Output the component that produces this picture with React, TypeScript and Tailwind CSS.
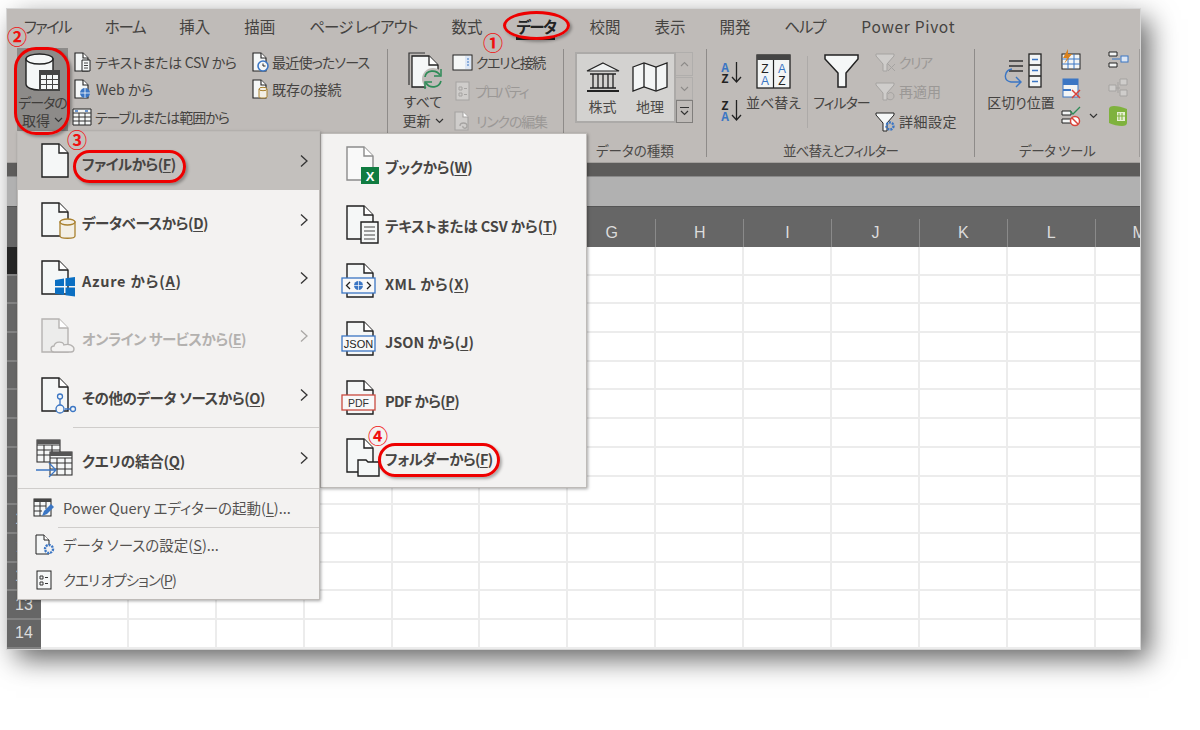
import React from "react";

const Ic = ({ children, w = 44, h = 40 }: { children?: React.ReactNode; w?: number; h?: number }) => (
  <svg width={w} height={h} viewBox={`0 0 ${w} ${h}`} className="shrink-0 overflow-visible">{children}</svg>
);
const Page = ({ c = "#1f1f1f", f = "#f5f7f7" }: { c?: string; f?: string }) => (
  <g fill={f} stroke={c} strokeWidth="1.4">
    <path d="M6 3H23L32 12V36H6Z" />
    <path d="M23 3V12H32" fill="#fff" />
  </g>
);
const B = "#3b76c4";
const Sm = ({ children, w = 20, h = 20 }: { children?: React.ReactNode; w?: number; h?: number }) => (
  <svg width={w} height={h} viewBox={`0 0 ${w} ${h}`} className="shrink-0 overflow-visible">{children}</svg>
);
const SmPage = ({ c = "#222", f = "#f5f7f7" }: { c?: string; f?: string }) => (
  <g fill={f} stroke={c} strokeWidth="1.1">
    <path d="M3 1H11L16 6V19H3Z" />
    <path d="M11 1V6H16" fill="#fff" />
  </g>
);

const Chevron = ({ dim }: { dim?: boolean }) => (
  <svg width="10" height="14" viewBox="0 0 10 14" className="absolute right-[10px] top-1/2 -mt-[7px]">
    <path d="M2 1.5L8 7L2 12.5" fill="none" stroke={dim ? "#a9a7a5" : "#333"} strokeWidth="1.3" />
  </svg>
);
const Down = () => (
  <svg width="9" height="6" viewBox="0 0 9 6" className="inline-block">
    <path d="M1 1L4.5 4.5L8 1" fill="none" stroke="#333" strokeWidth="1.2" />
  </svg>
);

const Sep = ({ className = "" }: { className?: string }) => <div className={`w-px shrink-0 bg-[#8e8b89] ${className}`} />;

const Row = ({ icon, text, dim, h = "h-[27.5px]", gap = "gap-[3px]", tk = "" }: { icon: React.ReactNode; text: string; dim?: boolean; h?: string; gap?: string; tk?: string }) => (
  <div className={`flex items-center whitespace-nowrap ${h} ${gap} ${dim ? "text-[#9b9896]" : "text-[#454341]"}`}>
    {icon}
    <span className={tk}>{text}</span>
  </div>
);

const GroupLabel = ({ children, className = "" }: { children: React.ReactNode; className?: string }) => (
  <div className={`absolute bottom-[2px] text-[13.5px] leading-[20px] text-[#4b4947] whitespace-nowrap ${className}`}>{children}</div>
);

const tabs = [
  { t: "ファイル", c: "tracking-[-1.7px]" },
  { t: "ホーム", c: "tracking-[-1.3px]" },
  { t: "挿入", c: "" },
  { t: "描画", c: "" },
  { t: "ページ レイアウト", c: "tracking-[-1px]" },
  { t: "数式", c: "" },
  { t: "データ", c: "tracking-[-1.6px] font-bold text-[#222] relative" },
  { t: "校閲", c: "" },
  { t: "表示", c: "" },
  { t: "開発", c: "" },
  { t: "ヘルプ", c: "tracking-[-1.2px]" },
  { t: "Power Pivot", c: "ml-[2px] tracking-[0.7px]" },
];

const KeyLabel = ({ t, k, tail = ")", bold = true }: { t: string; k: string; tail?: string; bold?: boolean }) => (
  <span className={`whitespace-nowrap ${bold ? "font-bold" : ""}`}>
    {t}(<span className="underline underline-offset-2">{k}</span>{tail}
  </span>
);

const M1 = ({ icon, t, k, active, dim, h = "h-[58.4px]", tk = "" }: { icon: React.ReactNode; t: string; k: string; active?: boolean; dim?: boolean; h?: string; tk?: string }) => (
  <div className={`relative flex items-center pl-[18px] gap-[2px] ${h} ${active ? "bg-[#c3c0bd]" : ""} ${dim ? "text-[#b3b1af]" : "text-[#474543]"}`}>
    {icon}
    <span className={`mt-[6px] text-[14.5px] ${tk}`}><KeyLabel t={t} k={k} /></span>
    <Chevron dim={dim} />
  </div>
);
const M2 = ({ icon, t, k, tk = "" }: { icon: React.ReactNode; t: string; k: string; tk?: string }) => (
  <div className="flex items-center pl-[20px] h-[58.4px] text-[#474543]">
    {icon}
    <span className={`mt-[6px] text-[14.5px] ${tk}`}><KeyLabel t={t} k={k} /></span>
  </div>
);
const M3 = ({ icon, t, k, tail, h, tk = "" }: { icon: React.ReactNode; t: string; k: string; tail: string; h: string; tk?: string }) => (
  <div className={`flex items-center pl-[14px] gap-[7px] text-[14.5px] text-[#555351] ${h} ${tk}`}>
    {icon}
    <KeyLabel t={t} k={k} tail={tail} bold={false} />
  </div>
);

const Num = ({ children, className }: { children: React.ReactNode; className: string }) => (
  <div className={`absolute text-[20px] font-bold leading-none text-[#f01010] ${className}`}>{children}</div>
);

const cols = ["A", "B", "C", "D", "E", "F", "G", "H", "I", "J", "K", "L", "M"];
const rows = [1, 2, 3, 4, 5, 6, 7, 8, 9, 10, 11, 12, 13, 14];

export default function App() {
  return (
    <div
      className="relative w-[1200px] h-[730px] overflow-hidden bg-white pt-[9px] pl-[7px] text-[14px] [font-feature-settings:'palt'] leading-[20px]"
      style={{ fontFamily: '"Noto Sans CJK JP", "Noto Sans", sans-serif' }}
    >
      {/* Window */}
      <div className="flex flex-col w-[1133px] h-[640px] overflow-hidden shadow-[9px_10px_26px_rgba(0,0,0,0.62)] bg-white outline outline-1 outline-[#d5d5d5]">
        {/* Tabs */}
        <div className="flex items-center h-[37px] shrink-0 bg-[#bfbbb8] pl-[17px] pb-[3px] gap-[34px] text-[15.5px] text-[#454341] whitespace-nowrap">
          {tabs.map(({ t, c }) => (
            <div key={t} className={c}>
              {t}
              {t === "データ" && <div className="absolute left-0 right-0 -bottom-[4px] h-[3px] bg-[#222]" />}
            </div>
          ))}
        </div>

        {/* Ribbon */}
        <div className="relative flex h-[117px] shrink-0 bg-[#bfbbb8] border-b border-[#a4a19e]">
          {/* Group 1 */}
          <div className="flex w-[380px] shrink-0 pl-[10px] pt-[2px]">
            <div className="flex flex-col items-center w-[51px] h-[83px] bg-[#8d8b89] text-[#3f3d3b] text-center leading-[18px] whitespace-nowrap">
              <svg width="40" height="40" viewBox="0 0 40 40" className="mt-[4px] shrink-0 overflow-visible">
                <path d="M3 7V32C3 36 10 38 16 38C23 38 30 36 30 32V7Z" fill="#f5f7f7" stroke="#222" strokeWidth="1.4" />
                <ellipse cx="16.5" cy="7" rx="13.5" ry="5" fill="#f5f7f7" stroke="#222" strokeWidth="1.4" />
                <rect x="16" y="18" width="21" height="21" fill="#444" />
                <g fill="#f5f7f7">
                  <rect x="18" y="23" width="5" height="4" /><rect x="24" y="23" width="5" height="4" /><rect x="30" y="23" width="5" height="4" />
                  <rect x="18" y="28" width="5" height="4" /><rect x="24" y="28" width="5" height="4" /><rect x="30" y="28" width="5" height="4" />
                  <rect x="18" y="33" width="5" height="4" /><rect x="24" y="33" width="5" height="4" /><rect x="30" y="33" width="5" height="4" />
                </g>
              </svg>
              <div className="mt-[1px] tracking-[-1px]">データの</div>
              <div className="flex items-center gap-[4px]">取得 <Down /></div>
            </div>
            <div className="ml-[4px] w-[178px] shrink-0">
              <Row tk="tracking-[-0.3px]" text="テキストまたは CSV から" icon={<Sm><SmPage /><path d="M10 8H18V19H10Z" fill="#f5f7f7" stroke="#222" /><path d="M12 11H16M12 13.5H16M12 16H16" stroke="#444" /></Sm>} />
              <Row text="Web から" gap="gap-[4px]" icon={<Sm><SmPage /><circle cx="13" cy="14" r="5" fill={B} /><path d="M8 14H18M13 9V19" stroke="#fff" strokeWidth=".8" /></Sm>} />
              <Row tk="tracking-[-1px]" text="テーブルまたは範囲から" icon={<Sm><path d="M1 2H19V18H1Z" fill="#f5f7f7" stroke="#222" /><path d="M1 6H19M1 10H19M1 14H19M7 6V18M13 6V18" stroke="#333" /><path d="M3 4H6M13 4H16" stroke={B} strokeWidth="1.4" /></Sm>} />
            </div>
            <div className="shrink-0">
              <Row tk="tracking-[-0.8px]" gap="gap-[2px]" text="最近使ったソース" icon={<Sm><SmPage /><circle cx="13" cy="14" r="5" fill="#f5f7f7" stroke={B} strokeWidth="1.6" /><path d="M13 11.5V14H15.5" stroke="#222" fill="none" /></Sm>} />
              <Row gap="gap-[2px]" text="既存の接続" icon={<Sm><SmPage /><path d="M9 10V18C9 19.4 17 19.4 17 18V10Z" fill="#f3efe5" stroke="#a9812f" /><ellipse cx="13" cy="10" rx="4" ry="1.7" fill="#f3efe5" stroke="#a9812f" /></Sm>} />
            </div>
          </div>
          <Sep className="mt-[3px] mb-[5px]" />

          {/* Group 2 */}
          <div className="flex w-[175px] shrink-0 pl-[12px] pt-[1px]">
            <div className="flex flex-col items-center w-[46px] text-[#454341] text-center leading-[19px]">
              <svg width="40" height="40" viewBox="0 0 40 40" className="mt-[4px] ml-[4px] shrink-0 overflow-visible">
                <path d="M4 34V2H20" fill="none" stroke="#333" strokeWidth="1.2" />
                <path d="M7 36V5H24L33 14V36Z" fill="#f5f7f7" stroke="#222" strokeWidth="1.3" />
                <path d="M24 5V14H33" fill="#fff" stroke="#222" strokeWidth="1.3" />
                <circle cx="28" cy="28" r="11" fill="#bfbbb8" />
                <path d="M20 26C21 19 31 18 35 24M36 30C34 37 25 38 21 32" fill="none" stroke="#2e8b57" strokeWidth="1.7" />
                <path d="M36 18V25H29M20 38V31H27" fill="none" stroke="#2e8b57" strokeWidth="1.5" />
              </svg>
              <div className="mt-[1px]">すべて</div>
              <div className="flex items-center gap-[4px]">更新 <Down /></div>
            </div>
            <div className="ml-[6px] shrink-0">
              <Row tk="tracking-[-1.5px]" h="h-[29.5px]" text="クエリと接続" gap="gap-[4px]" icon={<Sm><rect x="1" y="3" width="19" height="15" fill="#f5f7f7" stroke="#222" /><rect x="13" y="4" width="6" height="13" fill="#dce6f4" /><path d="M15 7H17M15 10H17M15 13H17" stroke={B} strokeWidth="1.2" /></Sm>} />
              <Row tk="tracking-[-2px]" dim h="h-[29.5px]" text="プロパティ" gap="gap-[3px]" icon={<Sm><rect x="4" y="1" width="13" height="18" fill="#cfcdcb" stroke="#a5a3a1" /><path d="M7 6H10V9H7ZM7 12H10V15H7ZM12 7.500H15M12 13.500H15" fill="none" stroke="#a5a3a1" /></Sm>} />
              <Row tk="tracking-[-1.2px]" dim h="h-[29.5px]" text="リンクの編集" gap="gap-[4px]" icon={<Sm><SmPage c="#a5a3a1" f="#cfcdcb" /><path d="M8 15C8 11 15 11 15 15C15 18 10 18 11 15" fill="none" stroke="#a5a3a1" strokeWidth="1.3" /></Sm>} />
            </div>
          </div>
          <Sep className="mt-[3px] mb-[5px]" />

          {/* Group 3 */}
          <div className="relative w-[142px] shrink-0 pl-[11px] pt-[6px]">
            <div className="flex">
              <div className="flex w-[101px] h-[71px] bg-[#d3d2d0] border-2 border-[#acaaa8] text-[#4b4947]">
                <div className="flex flex-col items-center w-[51px] pt-[8px]">
                  <svg width="34" height="30" viewBox="0 0 34 30" className="shrink-0">
                    <path d="M17 1L33 9H1Z" fill="#eef0f0" stroke="#222" strokeWidth="1.2" />
                    <path d="M4 12H30M4 26H30" stroke="#222" strokeWidth="1.4" />
                    <path d="M7 12V26M12 12V26M17 12V26M22 12V26M27 12V26" stroke="#222" strokeWidth="1.3" />
                    <path d="M1 29H33" stroke="#222" strokeWidth="2" />
                  </svg>
                  <div className="mt-[4px]">株式</div>
                </div>
                <div className="flex flex-col items-center w-[44px] pt-[8px]">
                  <svg width="36" height="30" viewBox="0 0 36 30" className="shrink-0">
                    <path d="M1 5L12 1L24 5L35 1V25L24 29L12 25L1 29Z" fill="#f3f5f5" stroke="#222" strokeWidth="1.3" />
                    <path d="M12 1V25M24 5V29" stroke="#222" strokeWidth="1.3" />
                  </svg>
                  <div className="mt-[4px]">地理</div>
                </div>
              </div>
              <div className="flex flex-col w-[17px] h-[71px]">
                <div className="flex h-[24px] items-center justify-center border border-[#b0aeac] border-l-0">
                  <svg width="9" height="6" viewBox="0 0 9 6"><path d="M1 5L4.5 1.500L8 5" fill="none" stroke="#8d8b89" strokeWidth="1.1" /></svg>
                </div>
                <div className="flex h-[23px] mt-[1px] items-center justify-center border border-[#b0aeac] border-l-0">
                  <svg width="9" height="6" viewBox="0 0 9 6"><path d="M1 1L4.5 4.500L8 1" fill="none" stroke="#8d8b89" strokeWidth="1.1" /></svg>
                </div>
                <div className="flex flex-col h-[23px] items-center justify-center border border-[#807e7c]">
                  <div className="w-[9px] h-px bg-[#333]" />
                  <svg width="9" height="6" viewBox="0 0 9 6" className="mt-[2px]"><path d="M1 1L4.5 4.500L8 1" fill="none" stroke="#333" strokeWidth="1.2" /></svg>
                </div>
              </div>
            </div>
            <GroupLabel className="left-[32px]">データの種類</GroupLabel>
          </div>
          <Sep className="mt-[3px] mb-[5px]" />

          {/* Group 4 */}
          <div className="relative flex w-[267px] shrink-0 pl-[12px]">
            <div className="flex flex-col w-[27px] pt-[14px] gap-[15px] text-[12px] font-bold leading-[11px]">
              <div className="flex items-center h-[23px]">
                <div className="text-center w-[12px]"><div className="text-[#3b76c4]">A</div><div className="text-[#222]">Z</div></div>
                <svg width="11" height="22" viewBox="0 0 11 22"><path d="M5.5 1V21M1 16L5.500 21L10 16" fill="none" stroke="#222" strokeWidth="1.3" /></svg>
              </div>
              <div className="flex items-center h-[23px]">
                <div className="text-center w-[12px]"><div className="text-[#222]">Z</div><div className="text-[#3b76c4]">A</div></div>
                <svg width="11" height="22" viewBox="0 0 11 22"><path d="M5.5 1V21M1 16L5.500 21L10 16" fill="none" stroke="#222" strokeWidth="1.3" /></svg>
              </div>
            </div>
            <div className="flex flex-col items-center w-[55px] pt-[8px] text-[#454341] whitespace-nowrap">
              <svg width="35" height="35" viewBox="0 0 35 35" className="shrink-0">
                <rect x="1" y="1" width="33" height="33" fill="#f3f5f5" stroke="#222" strokeWidth="1.3" />
                <rect x="1" y="1" width="33" height="5" fill="#444" />
                <path d="M17.500 6V34" stroke="#222" strokeWidth="1.2" />
                <text x="9" y="19" fontSize="12" textAnchor="middle" fill="#222" fontFamily="Liberation Sans">Z</text>
                <text x="9" y="31" fontSize="12" textAnchor="middle" fill={B} fontFamily="Liberation Sans">A</text>
                <text x="26" y="19" fontSize="12" textAnchor="middle" fill={B} fontFamily="Liberation Sans">A</text>
                <text x="26" y="31" fontSize="12" textAnchor="middle" fill="#222" fontFamily="Liberation Sans">Z</text>
              </svg>
              <div className="mt-[3px]">並べ替え</div>
            </div>
            <Sep className="ml-[6px] mt-[10px] mb-[34px] bg-[#adaaa8]" />
            <div className="flex flex-col items-center w-[53px] ml-[7px] pt-[7px] text-[#454341] whitespace-nowrap">
              <svg width="36" height="36" viewBox="0 0 36 36" className="shrink-0">
                <path d="M1 2H34V6L22 20V34H14V20L1 6Z" fill="#f5f7f7" stroke="#222" strokeWidth="1.5" />
              </svg>
              <div className="mt-[3px] tracking-[-1px]">フィルター</div>
            </div>
            <div className="ml-[7px] pt-[1px] shrink-0">
              <Row tk="tracking-[-1.5px]" dim h="h-[29.5px]" gap="gap-[3px]" text="クリア" icon={<Sm w={21}><path d="M1 2H19V4L12 12V19H8V12L1 4Z" fill="#cfcdcb" stroke="#a5a3a1" /><path d="M13 12L20 19M20 12L13 19" stroke="#a5a3a1" /></Sm>} />
              <Row dim h="h-[29.5px]" gap="gap-[3px]" text="再適用" icon={<Sm w={21}><path d="M1 2H19V4L12 12V19H8V12L1 4Z" fill="#cfcdcb" stroke="#a5a3a1" /><path d="M13 13C15 10 19 12 19 15C19 19 14 20 12 17" fill="none" stroke="#a5a3a1" /></Sm>} />
              <Row tk="tracking-[0.5px]" h="h-[29.5px]" gap="gap-[3px]" text="詳細設定" icon={<Sm w={21}><path d="M1 2H19V4L12 12V20H8V12L1 4Z" fill="#f5f7f7" stroke="#222" /><circle cx="15" cy="15" r="3.500" fill="none" stroke={B} strokeWidth="2.400" strokeDasharray="2 1" /></Sm>} />
            </div>
            <GroupLabel className="left-[76px] tracking-[-0.9px]">並べ替えとフィルター</GroupLabel>
          </div>
          <Sep className="mt-[3px] mb-[5px]" />

          {/* Group 5 */}
          <div className="relative flex flex-1 pl-[13px]">
            <div className="flex flex-col items-center w-[66px] pt-[7px] text-[#454341] whitespace-nowrap">
              <svg width="40" height="36" viewBox="0 0 40 36" className="ml-[4px] shrink-0 overflow-visible">
                <path d="M6 8H20M6 13H20M6 18H20" stroke="#333" strokeWidth="1.500" />
                <rect x="26" y="1" width="12" height="33" fill="#f3f5f5" stroke="#222" strokeWidth="1.300" />
                <path d="M26 12H38M26 23H38" stroke="#222" strokeWidth="1.300" />
                <path d="M29 6.500H35M29 17.500H35M29 28.500H35" stroke={B} strokeWidth="1.400" />
                <path d="M9 16C2 17 -1 27 8 29H17M13 24L18 29L13 34" fill="none" stroke={B} strokeWidth="1.400" />
              </svg>
              <div className="mt-[3px]">区切り位置</div>
            </div>
            <div className="flex flex-col ml-[7px] pt-[4px] gap-[8px]">
              <Sm><rect x="1" y="4" width="18" height="15" fill="#f3f5f5" stroke="#222" /><path d="M1 9H19M1 14H19M7 4V19M13 4V19" stroke={B} /><path d="M7 -1L2 8H6L3 14L11 4H7Z" fill="#d9821f" /></Sm>
              <Sm><rect x="2" y="1" width="15" height="18" fill="#f3f5f5" stroke={B} /><rect x="2" y="1" width="15" height="6" fill={B} /><path d="M2 12H10" stroke={B} strokeWidth="2" /><path d="M11 12L19 20M19 12L11 20" stroke="#d9433a" strokeWidth="1.500" /></Sm>
              <div className="flex items-center">
                <Sm><path d="M1 5H10V9H1ZM1 13H10V17H1Z" fill="#f3f5f5" stroke="#222" /><path d="M9 5L12 8L19 1" fill="none" stroke="#2e8b57" strokeWidth="1.300" /><circle cx="14" cy="15" r="4.500" fill="#fff" stroke="#d9433a" strokeWidth="1.500" /><path d="M11 12L17 18" stroke="#d9433a" strokeWidth="1.500" /></Sm>
                <span className="ml-[8px] flex"><Down /></span>
              </div>
            </div>
            <div className="flex flex-col ml-[10px] pt-[4px] gap-[8px]">
              <Sm><path d="M1 2H9V6H1ZM1 13H9V17H1Z" fill="#f3f5f5" stroke="#222" /><rect x="13" y="6" width="7" height="6" fill="#dce6f4" stroke={B} /><path d="M4 9H12" stroke={B} /></Sm>
              <Sm><path d="M1 7H8V13H1ZM12 1H19V7H12ZM12 12H19V18H12Z" fill="#cfcdcb" stroke="#a5a3a1" /><path d="M8 10H12M10 4V15" stroke="#a5a3a1" /></Sm>
              <Sm><path d="M1 3C1 1 3 0 6 0C10 0 14 1 19 3V17C19 19 17 20 14 20C10 20 5 19 1 17Z" fill="#7fb23d" /><path d="M9 6H17V15H9Z" fill="#e6efd3" /><path d="M11 7V14M14 7V14M9 10H17" stroke="#7fb23d" /></Sm>
            </div>
            <GroupLabel className="left-[44px] tracking-[-0.4px]">データ ツール</GroupLabel>
            <div className="absolute right-0 top-[3px] bottom-[5px] w-px bg-[#9f9c9a]" />
          </div>
        </div>

        <div className="h-[13px] shrink-0 bg-[#5d5c5b]" />
        <div className="h-[30px] shrink-0 bg-[#b1b1b1] border-t border-[#8a8a8a]" />

        {/* Column header */}
        <div className="flex h-[41px] shrink-0 items-end bg-[#666666] border-t border-[#555]">
          <div className="w-[34px] shrink-0" />
          {cols.map((c) => (
            <div key={c} className="flex h-[28px] w-[87.9px] shrink-0 items-center justify-center border-r border-[#8a8a8a] text-[#dcdcdc] text-[16px]" style={{ fontFamily: '"Liberation Sans", sans-serif' }}>
              {c}
            </div>
          ))}
        </div>

        {/* Grid */}
        <div className="flex-1 overflow-hidden">
          {rows.map((r) => (
            <div key={r} className="flex h-[28.7px]">
              <div className={`flex w-[34px] shrink-0 items-center justify-center border-b-2 border-[#828282] text-[16px] text-[#dcdcdc] ${r === 1 ? "bg-[#242424]" : "bg-[#666666]"}`} style={{ fontFamily: '"Liberation Sans", sans-serif' }}>
                {r}
              </div>
              {cols.map((c) => (
                <div key={c} className="h-full w-[87.9px] shrink-0 border-r-2 border-b-2 border-[#ececec] bg-white" />
              ))}
            </div>
          ))}
        </div>
      </div>

      {/* Menu 2 */}
      <div className="absolute left-[320px] top-[133px] w-[267px] h-[355px] pt-[1px] bg-[#f3f2f1] border border-[#bebbb8] shadow-[1px_1px_3px_rgba(0,0,0,0.35)]">
        <M2 tk="tracking-[-0.3px]" t="ブックから" k="W" icon={<Ic><Page c="#8c8c8c" f="#f9f9f9" /><rect x="20" y="23" width="18" height="17" fill="#107c41" /><text x="29" y="36.500" fontSize="13" fontWeight="700" textAnchor="middle" fill="#fff" fontFamily="Liberation Sans">X</text></Ic>} />
        <M2 tk="tracking-[-0.1px]" t="テキストまたは CSV から" k="T" icon={<Ic><Page /><path d="M20 19H37V40H20Z" fill="#f5f7f7" stroke="#1f1f1f" strokeWidth="1.400" /><path d="M23 24H34M23 28H34M23 32H34M23 36H34" stroke="#444" /></Ic>} />
        <M2 tk="tracking-[0.5px]" t="XML から" k="X" icon={<Ic><Page /><rect x="1" y="17" width="33" height="15" fill="#f8f8f8" stroke={B} strokeWidth="1.300" /><path d="M9 21L5.500 24.500L9 28M26 21L29.500 24.500L26 28" fill="none" stroke="#222" strokeWidth="1.300" /><circle cx="17.500" cy="24.500" r="4.500" fill={B} /><path d="M13 24.500H22M17.500 20V29" stroke="#fff" strokeWidth=".7" /></Ic>} />
        <M2 t="JSON から" k="J" icon={<Ic><Page /><rect x="1" y="17" width="33" height="15" fill="#f8f8f8" stroke={B} strokeWidth="1.300" /><text x="17.500" y="28.500" fontSize="11" textAnchor="middle" fill="#222" fontFamily="Liberation Sans">JSON</text></Ic>} />
        <M2 tk="tracking-[-0.6px]" t="PDF から" k="P" icon={<Ic><Page /><rect x="1" y="17" width="33" height="15" fill="#f8f8f8" stroke="#c94a3f" strokeWidth="1.300" /><text x="17.500" y="28.500" fontSize="10.500" textAnchor="middle" fill="#333" fontFamily="Liberation Sans">PDF</text></Ic>} />
        <M2 tk="tracking-[-0.6px]" t="フォルダーから" k="F" icon={<Ic><Page /><path d="M17 37V24H25L27 26H38V40H17Z" fill="#f5f7f7" stroke="#1f1f1f" strokeWidth="1.400" /></Ic>} />
      </div>

      {/* Menu 1 */}
      <div className="absolute left-[17px] top-[131px] w-[303px] h-[469px] bg-[#f3f2f1] border border-[#bebbb8] shadow-[1px_1px_3px_rgba(0,0,0,0.35)]">
        <M1 tk="tracking-[-0.5px]" active t="ファイルから" k="F" icon={<Ic><Page /></Ic>} />
        <M1 tk="tracking-[-0.4px]" t="データベースから" k="D" icon={<Ic><Page /><path d="M24 22V36C24 39 39 39 39 36V22Z" fill="#f3efe5" stroke="#a9812f" strokeWidth="1.300" /><ellipse cx="31.500" cy="22" rx="7.500" ry="3" fill="#f3efe5" stroke="#a9812f" strokeWidth="1.300" /></Ic>} />
        <M1 tk="tracking-[0.8px]" t="Azure から" k="A" icon={<Ic><Page /><path d="M19 22L28 20.500V28H19ZM29.500 20.300L39 19V28H29.500ZM19 29.500H28V37L19 35.700ZM29.500 29.500H39V38.500L29.500 37.200Z" fill="#0b6fc2" /></Ic>} />
        <M1 tk="tracking-[-0.5px]" dim t="オンライン サービスから" k="E" icon={<Ic><Page c="#b5b3b1" f="#ececeb" /><path d="M18 36C14 36 14 30 18 30C19 25 27 25 28 29C33 27 38 30 38 33C38 35 37 36 35 36Z" fill="#f3f2f1" stroke="#b5b3b1" strokeWidth="1.300" /></Ic>} />
        <M1 tk="tracking-[-0.4px]" t="その他のデータ ソースから" k="O" icon={<Ic><Page /><g fill="#f5f7f7" stroke={B} strokeWidth="1.300"><path d="M24 24V30M29 34H35" /><circle cx="24" cy="21.500" r="2.500" /><circle cx="24" cy="34" r="4" /><circle cx="37" cy="34" r="2.500" /></g></Ic>} />
        <div className="h-[3px]" />
        <div className="ml-[55px] h-px bg-[#cfcdcb]" />
        <M1 tk="tracking-[-0.2px]" h="h-[60px]" t="クエリの結合" k="Q" icon={<Ic><g fill="#f5f7f7" stroke="#333" strokeWidth="1.100"><rect x="1" y="2" width="23" height="22" /><path d="M1 7H24M1 12H24M1 17H24M8 7V24M16 7V24" /></g><rect x="1" y="2" width="23" height="4" fill="#555" /><g fill="#f5f7f7" stroke="#333" strokeWidth="1.100"><rect x="14" y="14" width="22" height="23" /><path d="M14 20H36M14 25H36M14 31H36M21 20V37M29 20V37" /></g><rect x="14" y="14" width="22" height="4" fill="#555" /><path d="M0 32H19M13 25L20 32L13 39" fill="none" stroke={B} strokeWidth="1.300" /></Ic>} />
        <div className="h-px bg-[#cfcdcb]" />
        <M3 h="h-[38px]" t="Power Query エディターの起動" k="L" tail=")..." icon={<Sm w={24} h={22}><rect x="2" y="2" width="17" height="17" fill="#f5f7f7" stroke="#222" /><rect x="2" y="2" width="17" height="3" fill="#444" /><path d="M2 9H14M2 14H10M8 5V19M14 5V12" stroke="#333" /><path d="M10 19L12 14L19 7L22 10L15 17Z" fill={B} /></Sm>} />
        <div className="ml-[40px] h-px bg-[#cfcdcb]" />
        <M3 h="h-[35px]" t="データ ソースの設定" k="S" tail=")..." icon={<Sm w={24} h={22}><path d="M4 1H12L17 6V20H4Z" fill="#f5f7f7" stroke="#222" /><path d="M12 1V6H17" fill="#fff" stroke="#222" /><circle cx="17" cy="15" r="4" fill="#f3f2f1" stroke={B} strokeWidth="2.400" strokeDasharray="2 1" /></Sm>} />
        <M3 tk="tracking-[-1px]" h="h-[35px]" t="クエリ オプション" k="P" tail=")" icon={<Sm w={24} h={22}><rect x="5" y="2" width="14" height="18" fill="#f5f7f7" stroke="#222" /><path d="M8 7H11V10H8ZM8 13H11V16H8ZM13 8.500H16M13 14.500H16" fill="none" stroke="#333" /></Sm>} />
      </div>

      {/* Annotations */}
      <div className="absolute left-[503px] top-[11px] w-[67px] h-[29px] rounded-[50%] border-[3px] border-[#ee0000] shadow-[2px_2px_3px_rgba(0,0,0,0.3)]" />
      <div className="absolute left-[14px] top-[47px] w-[56px] h-[88px] rounded-[22px] border-[3px] border-[#ee0000] shadow-[2px_2px_3px_rgba(0,0,0,0.3)]" />
      <div className="absolute left-[73px] top-[150px] w-[113px] h-[33px] rounded-[17px] border-[3px] border-[#ee0000] shadow-[2px_2px_3px_rgba(0,0,0,0.3)]" />
      <div className="absolute left-[378px] top-[443px] w-[122px] h-[34px] rounded-[17px] border-[3px] border-[#ee0000] shadow-[2px_2px_3px_rgba(0,0,0,0.3)]" />
      <Num className="left-[483px] top-[33px]">①</Num>
      <Num className="left-[7px] top-[27px]">②</Num>
      <Num className="left-[67px] top-[130px]">③</Num>
      <Num className="left-[368px] top-[426px]">④</Num>
    </div>
  );
}
